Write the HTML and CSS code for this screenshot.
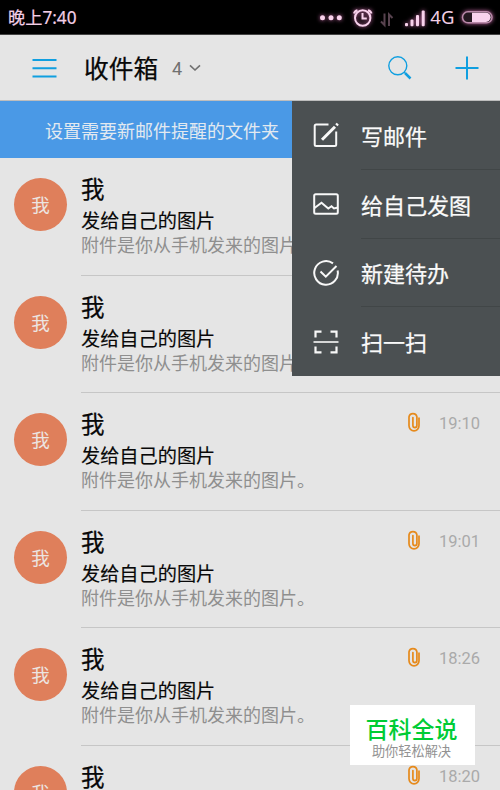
FILE: index.html
```html
<!DOCTYPE html>
<html lang="zh-CN">

<head>
  <meta charset="utf-8">
  <title>收件箱</title>
  <link rel="stylesheet" href="styles.css">
</head>

<body>
  <svg width="0" height="0" class="symbols">
    <symbol id="clip" viewBox="0 0 12 20">
      <path d="M11 6v7.800a5 5 0 0 1-10 0V5a4 4 0 0 1 7.900 0v8.600a2 2 0 0 1-4 0V5.600" fill="none" stroke="currentColor" stroke-width="1.700" stroke-linecap="round"/>
    </symbol>
  </svg>

  <div class="statusbar">
    <span class="clock">晚上7:40</span>
    <svg class="status-icons" width="184" height="34" viewBox="316 0 184 34">
      <g class="glow">
        <circle cx="322.500" cy="17.700" r="2.500"/>
        <circle cx="331" cy="17.700" r="2.500"/>
        <circle cx="339.300" cy="17.700" r="2.500"/>
        <g class="line">
          <circle cx="362.700" cy="18" r="7.700"/>
          <path d="M362.500 13v5.500h4.300M354 13.500q.5-2.500 3.500-3.300M371.500 13.500q-.5-2.500-3.500-3.300"/>
        </g>
        <rect x="405" y="23" width="3" height="3.300" rx="1"/>
        <rect x="410.500" y="19.500" width="3" height="6.800" rx="1"/>
        <rect x="416" y="15" width="3" height="11.300" rx="1"/>
        <rect x="421.700" y="10.500" width="3" height="15.800" rx="1"/>
      </g>
      <path class="sync" d="M384.500 13.500v11.500l-3.500-3.500M389 26V14.500l3.500 3.500"/>
      <text x="430.300" y="24.300">4G</text>
      <g class="glow">
        <rect class="battery" x="462.500" y="11.800" width="29.500" height="11" rx="5.500"/>
        <path d="M472 12.700h14a4.600 4.600 0 0 1 0 9.200H472z"/>
      </g>
    </svg>
  </div>

  <div class="header">
    <svg class="menu-icon" width="26" height="22" viewBox="0 0 26 22">
      <path d="M.5 3h24M.5 11.300h24M.5 19.600h24"/>
    </svg>
    <h1 class="title">收件箱</h1>
    <span class="count">4</span>
    <svg class="arrow" width="12" height="8" viewBox="0 0 12 8"><path d="M1 1.300l5 4.700 5-4.700"/></svg>
    <svg class="search-icon" width="26" height="26" viewBox="0 0 26 26">
      <circle cx="10.800" cy="10.800" r="9"/>
      <path d="M17 17l1 1"/><path class="handle" d="M18 18l5.500 5.500"/>
    </svg>
    <svg class="add-icon" width="24" height="24" viewBox="0 0 24 24"><path d="M.5 12h23M12 .5v23"/></svg>
  </div>

  <div class="content">
    <div class="banner">设置需要新邮件提醒的文件夹</div>

    <div class="mail">
      <div class="avatar">我</div>
      <div class="mail-body">
        <div class="mail-top"><span class="name">我</span></div>
        <div class="subject">发给自己的图片</div>
        <div class="preview">附件是你从手机发来的图片。</div>
      </div>
    </div>
    <div class="mail">
      <div class="avatar">我</div>
      <div class="mail-body">
        <div class="mail-top"><span class="name">我</span></div>
        <div class="subject">发给自己的图片</div>
        <div class="preview">附件是你从手机发来的图片。</div>
      </div>
    </div>
    <div class="mail">
      <div class="avatar">我</div>
      <div class="mail-body">
        <div class="mail-top"><span class="name">我</span><svg class="clip"><use href="#clip"/></svg><span class="time">19:10</span></div>
        <div class="subject">发给自己的图片</div>
        <div class="preview">附件是你从手机发来的图片。</div>
      </div>
    </div>
    <div class="mail">
      <div class="avatar">我</div>
      <div class="mail-body">
        <div class="mail-top"><span class="name">我</span><svg class="clip"><use href="#clip"/></svg><span class="time">19:01</span></div>
        <div class="subject">发给自己的图片</div>
        <div class="preview">附件是你从手机发来的图片。</div>
      </div>
    </div>
    <div class="mail">
      <div class="avatar">我</div>
      <div class="mail-body">
        <div class="mail-top"><span class="name">我</span><svg class="clip"><use href="#clip"/></svg><span class="time">18:26</span></div>
        <div class="subject">发给自己的图片</div>
        <div class="preview">附件是你从手机发来的图片。</div>
      </div>
    </div>
    <div class="mail last">
      <div class="avatar">我</div>
      <div class="mail-body">
        <div class="mail-top"><span class="name">我</span><svg class="clip"><use href="#clip"/></svg><span class="time">18:20</span></div>
      </div>
    </div>

    <div class="dropdown">
      <div class="item">
        <svg viewBox="0 0 26 26"><path d="M15.500 2.500H3.200a1.500 1.500 0 0 0-1.500 1.500v18.500a1.500 1.500 0 0 0 1.500 1.500h18.500a1.500 1.500 0 0 0 1.500-1.500V9.500"/><path class="pen" d="M9 17.700L22 4.700M23.300 3.200l1.500-1.500"/></svg>
        <span>写邮件</span>
      </div>
      <div class="item">
        <svg viewBox="0 0 26 26"><rect x="1.200" y="3.200" width="23.600" height="19.600" rx="1.500"/><path d="M1.500 17l7-5.200 6.800 5.700 3.200-2.300 2.500 2.300 4-1"/></svg>
        <span>给自己发图</span>
      </div>
      <div class="item">
        <svg viewBox="0 0 26 26"><path d="M20 3.400A11.800 11.800 0 1 0 24.600 10.500"/><path d="M7.500 11.500l5.300 5.200L23.500 6"/></svg>
        <span>新建待办</span>
      </div>
      <div class="item">
        <svg viewBox="0 0 26 26"><path class="scan" d="M.5 13h25"/><path class="corner" d="M2.500 8.500V2.700h6M17.500 2.700h6v5.800M23.500 17.500v5.800h-6M8.500 23.300h-6v-5.800"/></svg>
        <span>扫一扫</span>
      </div>
    </div>
  </div>

  <div class="stamp">
    <div class="stamp-title">百科全说</div>
    <div class="stamp-text">助你轻松解决</div>
  </div>
</body>

</html>
```
FILE: styles.css
```css
* {
  box-sizing: border-box;
}

html {
  overflow: hidden;
}

body {
  position: relative;
  margin: 0;
  width: 500px;
  height: 790px;
  overflow: hidden;
  background: #e5e5e5;
  color: #080808;
  font-family: Roboto, "Noto Sans CJK SC", sans-serif;
}

svg {
  display: block;
  fill: none;
  flex: none;
}

.symbols {
  position: absolute;
}

/* status bar */
.statusbar {
  display: flex;
  justify-content: space-between;
  height: 35px;
  padding-left: 8px;
  background: #000;
  border-bottom: 1px solid #444;
  color: #f3cfe6;
}

.clock {
  font-family: "Noto Sans", "Noto Sans CJK SC", sans-serif;
  font-size: 17.2px;
  line-height: 35px;
  -webkit-text-stroke: .2px;
}

.glow {
  fill: #f8d2ec;
  filter: drop-shadow(0 0 2px #c96aa8);
}

.glow .line {
  fill: none;
  stroke: #f8d2ec;
  stroke-width: 2;
}

.glow .battery {
  fill: #241820;
  stroke: #b98aa9;
  stroke-width: 1.5;
}

.sync {
  stroke: #58434f;
  stroke-width: 2;
}

.status-icons text {
  fill: #f3cfe6;
  font: 18.5px "Noto Sans", sans-serif;
}

/* header */
.header {
  display: flex;
  align-items: center;
  height: 66px;
  padding: 0 21px 0 32px;
  border-bottom: 1px solid #bdbdbd;
}

.menu-icon,
.search-icon,
.add-icon {
  stroke: #109fe0;
  stroke-width: 2;
}

.title {
  margin: 0 0 0 26px;
  padding-top: 5px;
  font-size: 24.7px;
  line-height: 36px;
  font-weight: 400;
  -webkit-text-stroke: .25px;
}

.count {
  margin-left: 14px;
  padding-top: 2px;
  color: #707070;
  font-size: 18px;
}

.arrow {
  margin-left: 7px;
  stroke: #707070;
  stroke-width: 1.6;
}

.search-icon {
  margin-left: auto;
  stroke-width: 1.4;
}

.search-icon .handle {
  stroke-width: 2.5;
}

.add-icon {
  margin-left: 42px;
}

/* mail list */
.content {
  position: relative;
}

.banner {
  height: 57px;
  padding-left: 45px;
  background: #4a99e6;
  color: #e2e9f0;
  font-size: 18px;
  line-height: 61px;
}

.mail {
  display: flex;
  height: 117.5px;
  padding: 20px 0 0 14px;
}

.avatar {
  flex: none;
  width: 53px;
  height: 53px;
  border-radius: 50%;
  background: #df7f5b;
  color: #ece5e2;
  font-size: 18.5px;
  line-height: 56px;
  text-align: center;
}

.mail-body {
  flex: 1;
  margin: -20px 0 0 14px;
  padding-top: 16px;
  border-bottom: 1px solid #c6c6c6;
}

.last .mail-body {
  border-bottom: 0;
}

.mail-top {
  display: flex;
  height: 32px;
  padding-right: 20px;
}

.name {
  font-size: 23.5px;
  line-height: 32px;
  -webkit-text-stroke: .25px;
}

.clip {
  width: 12px;
  height: 20px;
  margin: 3px 0 0 auto;
  color: #e68a1c;
}

.time {
  width: 41px;
  margin-left: 19px;
  color: #aaa;
  font-size: 16.5px;
  line-height: 30px;
  text-align: right;
}

.subject {
  font-size: 19.2px;
  line-height: 31px;
  -webkit-text-stroke: .15px;
}

.preview {
  color: #8f8f8f;
  font-size: 18px;
  line-height: 18px;
  white-space: nowrap;
}

/* popup menu */
.dropdown {
  position: absolute;
  top: 0;
  right: 0;
  width: 208px;
  height: 275px;
  background: #4b5052;
  color: #fafafa;
  font-size: 22px;
}

.item {
  display: flex;
  align-items: center;
  height: 68.75px;
  padding-left: 21px;
}

.item svg {
  width: 26px;
  height: 26px;
  stroke: #f8f8f8;
  stroke-width: 2;
}

.item .pen {
  stroke-width: 3;
}

.item .corner {
  stroke-width: 2.2;
}

.item .scan {
  stroke-width: 1.6;
}

.item span {
  flex: 1;
  height: 69px;
  margin-left: 22px;
  line-height: 73px;
  border-bottom: 1px solid #414647;
  -webkit-text-stroke: .25px;
}

.item:last-child span {
  border-bottom: 0;
}

/* corner stamp */
.stamp {
  position: absolute;
  left: 350px;
  top: 705px;
  width: 125px;
  height: 60px;
  padding: 11px 2px 0 0;
  background: #fff;
  text-align: center;
}

.stamp-title {
  color: #00cc35;
  font-size: 23px;
  font-weight: 500;
  line-height: 30px;
}

.stamp-text {
  color: #929292;
  font-size: 13.2px;
  line-height: 12px;
}
```
